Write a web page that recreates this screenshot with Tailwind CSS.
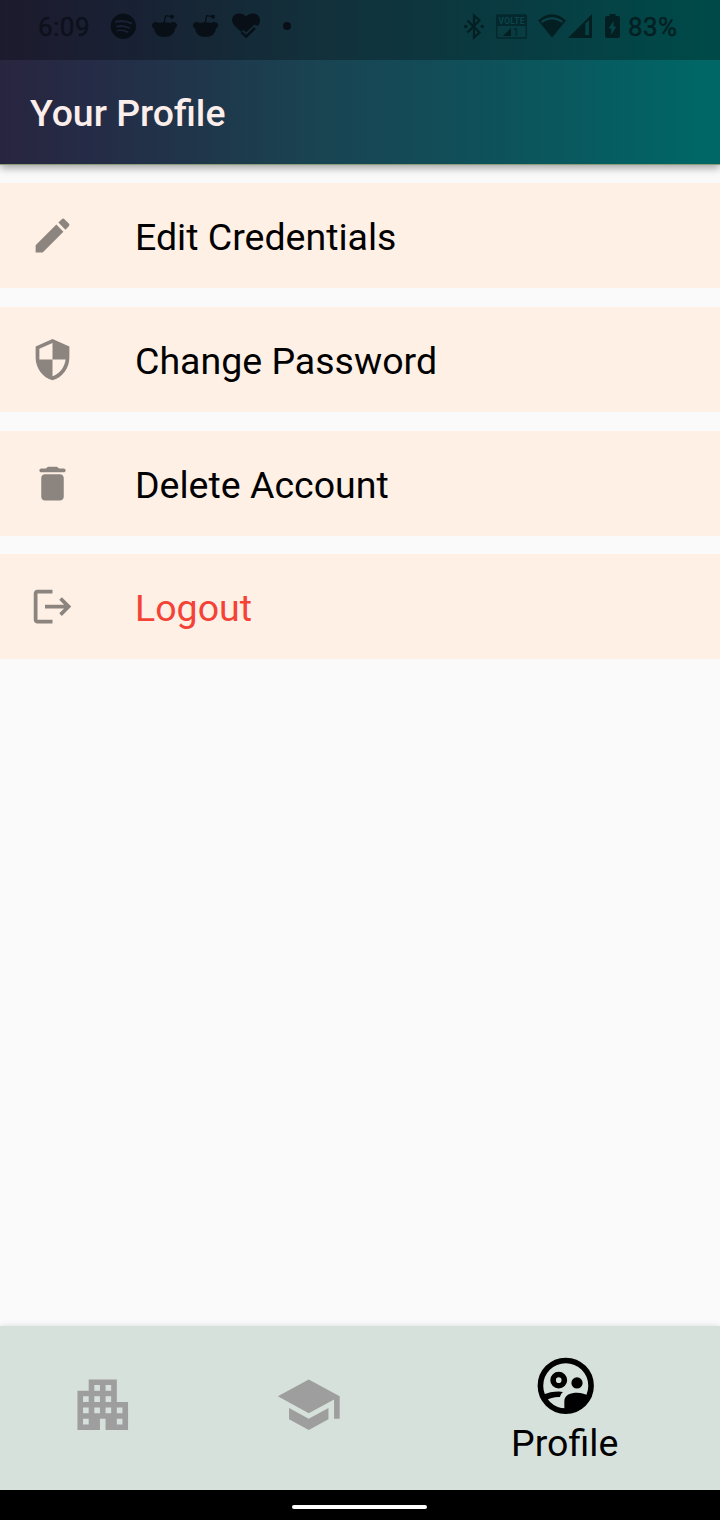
<!DOCTYPE html>
<html lang="en">
<head>
<meta charset="utf-8">
<title>Your Profile</title>
<script src="https://cdn.jsdelivr.net/npm/@tailwindcss/browser@4"></script>
</head>
<body class="font-['Roboto',sans-serif]">
<div class="flex h-[1520px] w-[720px] flex-col overflow-hidden bg-[#fafafa]">
  <header class="relative z-10 h-[164px] shrink-0 bg-[linear-gradient(90deg,#29253f_0%,#252b46_12%,#1f364b_28%,#1a4352_43%,#124c57_60%,#09595f_79%,#006666_97%)] shadow-[0_1px_0_#8a9c78,0_4px_8px_rgba(0,0,0,0.35)]">
    <div class="flex h-[60px] items-start bg-black/28">
      <svg class="h-[60px] w-[720px]" viewBox="0 0 720 60" font-family="Roboto" font-size="26">
        <g fill="#080f17" color="#080f17">
        <text x="38" y="36" textLength="51.500" fill="#0c111c" stroke="#0c111c" stroke-width=".4">6:09</text>
        <path fill-rule="evenodd" d="M123.300 13.500a12.700 12.700 0 1 0 .01 0zM115 21q9-2.500 17.500 1.800l-1 1.700q-7.500-3.700-16.100-1.500zm.8 4.700q7.500-2 14.700 1.900l-1 1.500q-6.300-3.300-13.200-1.600zm.7 4.200q6.300-1.500 12.200 1.700l-.9 1.300q-5.200-2.700-10.900-1.500z"/>
        <g id="pot"><path d="M156 22q1.500 0 2.500 1 6-1.600 12 0 1-1 2.500-1 4 0 4 3.600 0 1.900-2 2.900-1 8.500-10.500 8.500T154 28.500q-2-1-2-2.900 0-3.600 4-3.600z"/><circle cx="172" cy="16.800" r="2"/><path d="M164 23l1.700-7.300 6 1" fill="none" stroke="currentColor" stroke-width="1.200"/></g>
        <use href="#pot" x="41"/>
        <path d="M241.500 32l-4.500-4c-3-3-5-5-5-8a6.500 6.500 0 0 1 7-6.500c3 0 5 1 7 3 2-2 4-3 7-3a6.500 6.500 0 0 1 7 6.500c0 2-.5 4-2 6l-3.500-1.500-8.500 8-3-3z"/>
        <path d="M241.500 32.300l4.700 4.300 8.800-8.600" fill="none" stroke="currentColor" stroke-width="2.500"/>
        <circle cx="287" cy="26" r="4"/>
        </g>
        <g fill="#041f22" color="#041f22">
        <path d="M467.500 20.500l12 12-5.500 5V15.500l5.500 5-12 12" fill="none" stroke="currentColor" stroke-width="2.200"/><circle cx="465.700" cy="26.500" r="1.700"/><circle cx="482.300" cy="26.500" r="1.700"/>
        <rect x="496.700" y="15" width="29.600" height="23" rx="1" fill="none" stroke="#04282d" stroke-width="1.500"/><path d="M497 15h29v11h-29z" fill="#04282d"/>
        <text x="498.500" y="23.800" font-size="8.500" font-weight="700" textLength="26" fill="#0a454c">VOLTE</text><path d="M503 36h8v-8z"/><text x="513" y="36" font-size="10.500">1</text>
        <path d="M538 20.500q14-12.500 28 0l-14 17z"/><path d="M541.500 22q10.500-7.500 21 0" fill="none" stroke="#094349" stroke-width="2"/>
        <path fill-rule="evenodd" d="M568 38l24-24v24zm17.300-14.500v11.500h3.700V20z"/>
        <path fill-rule="evenodd" d="M607 16h2.500v-2h6v2h2.500q2 0 2 2v18q0 2-2 2h-11q-2 0-2-2V18q0-2 2-2zm7 4.500l-5.500 8h3l-.5 6.500 5.500-8.500h-3z"/>
        <text x="628" y="36" textLength="49" stroke="currentColor" stroke-width=".4">83%</text>
        </g>
      </svg>
    </div>
    <h1 class="flex h-[104px] items-center pl-[30px] pt-[2px] text-[37.4px] font-medium text-[#fceeea]">Your Profile</h1>
  </header>

  <main class="flex grow flex-col gap-[18.750px] pt-[19px] text-[37.5px] text-black">
    <div class="flex h-[105px] items-center gap-[60px] bg-[#fff0e6] pl-[30px]">
      <svg class="size-[45px] text-[#8c847e]" viewBox="0 0 24 24" fill="currentColor"><path d="M3 17.250V21h3.750L17.810 9.940l-3.750-3.750L3 17.250zM20.710 7.040a1 1 0 0 0 0-1.410l-2.340-2.340a1 1 0 0 0-1.410 0l-1.830 1.830 3.750 3.750 1.830-1.830z"/></svg>
      <span class="pt-[3px]">Edit Credentials</span>
    </div>
    <div class="flex h-[105px] items-center gap-[60px] bg-[#fff0e6] pl-[30px]">
      <svg class="size-[45px] text-[#8c847e]" viewBox="0 0 24 24" fill="currentColor"><path d="M12 1L3 5v6c0 5.550 3.840 10.740 9 12 5.160-1.260 9-6.450 9-12V5l-9-4zm0 10.990h7c-.53 4.120-3.280 7.790-7 8.940V12H5V6.300l7-3.110v8.800z"/></svg>
      <span class="pt-[3px]">Change Password</span>
    </div>
    <div class="flex h-[105px] items-center gap-[60px] bg-[#fff0e6] pl-[30px]">
      <svg class="size-[45px] text-[#8c847e]" viewBox="0 0 24 24" fill="currentColor"><path d="M6 19c0 1.100.9 2 2 2h8c1.100 0 2-.9 2-2V9c0-1.100-.9-2-2-2H8c-1.100 0-2 .9-2 2v10zM18 4h-2.500l-.71-.71c-.18-.18-.44-.29-.7-.29H9.910c-.26 0-.52.11-.7.29L8.500 4H6c-.55 0-1 .45-1 1s.45 1 1 1h12c.55 0 1-.45 1-1s-.45-1-1-1z"/></svg>
      <span class="pt-[4px]">Delete Account</span>
    </div>
    <div class="flex h-[105px] items-center gap-[60px] bg-[#fff0e6] pl-[30px]">
      <svg class="size-[45px] text-[#8c847e]" viewBox="0 0 24 24" fill="currentColor"><path d="M17 7l-1.410 1.410L18.170 11H8v2h10.170l-2.580 2.580L17 17l5-5zM4 5h8V3H4c-1.100 0-2 .9-2 2v14c0 1.100.9 2 2 2h8v-2H4V5z"/></svg>
      <span class="pt-[3px] text-[#f44336]">Logout</span>
    </div>
  </main>

  <nav class="flex h-[164px] shrink-0 bg-[#d7e1dc] text-[#9e9e9e] shadow-[0_0_6px_rgba(0,0,0,0.12)]">
    <div class="flex w-[205.700px] items-center justify-center pb-[6px]">
      <svg class="size-[67.500px]" viewBox="0 0 24 24" fill="currentColor"><path d="M17 11V3H7v4H3v14h8v-4h2v4h8V11h-4zM7 19H5v-2h2v2zm0-4H5v-2h2v2zm0-4H5V9h2v2zm4 4H9v-2h2v2zm0-4H9V9h2v2zm0-4H9V5h2v2zm4 8h-2v-2h2v2zm0-4h-2V9h2v2zm0-4h-2V5h2v2zm4 12h-2v-2h2v2zm0-4h-2v-2h2v2z"/></svg>
    </div>
    <div class="flex w-[205.700px] items-center justify-center pb-[6px]">
      <svg class="size-[67.500px]" viewBox="0 0 24 24" fill="currentColor"><path d="M5 13.180v4L12 21l7-3.820v-4L12 17l-7-3.820zM12 3L1 9l11 6 9-4.910V17h2V9L12 3z"/></svg>
    </div>
    <div class="flex grow flex-col items-center pt-[26.400px] text-black">
      <svg class="size-[67.500px]" viewBox="0 0 24 24" fill="currentColor">
        <circle cx="12" cy="12" r="9" fill="none" stroke="currentColor" stroke-width="2"/>
        <circle cx="9.500" cy="10" r="2" fill="none" stroke="currentColor" stroke-width="2"/>
        <circle cx="16" cy="11" r="2"/>
        <path d="M11.500 21.500V17.500C11.500 15.200 13.800 14.500 16 14.500c1.500 0 3.200.4 4.300 1.300l-2.300 3.700-4 2zM3.800 15.200Q6.500 14 9.500 14q.8 0 1.500.2-.9.700-1.100 1.800-2.900-.1-5 1.300z"/>
      </svg>
      <span class="mr-[2px] pt-[1px] text-[37.5px] leading-[44px]">Profile</span>
    </div>
  </nav>
  <div class="flex h-[30px] shrink-0 justify-center bg-black pr-[1px] pt-[15px]"><div class="h-[4px] w-[135px] rounded-full bg-white"></div></div>
</div>
</body>
</html>
